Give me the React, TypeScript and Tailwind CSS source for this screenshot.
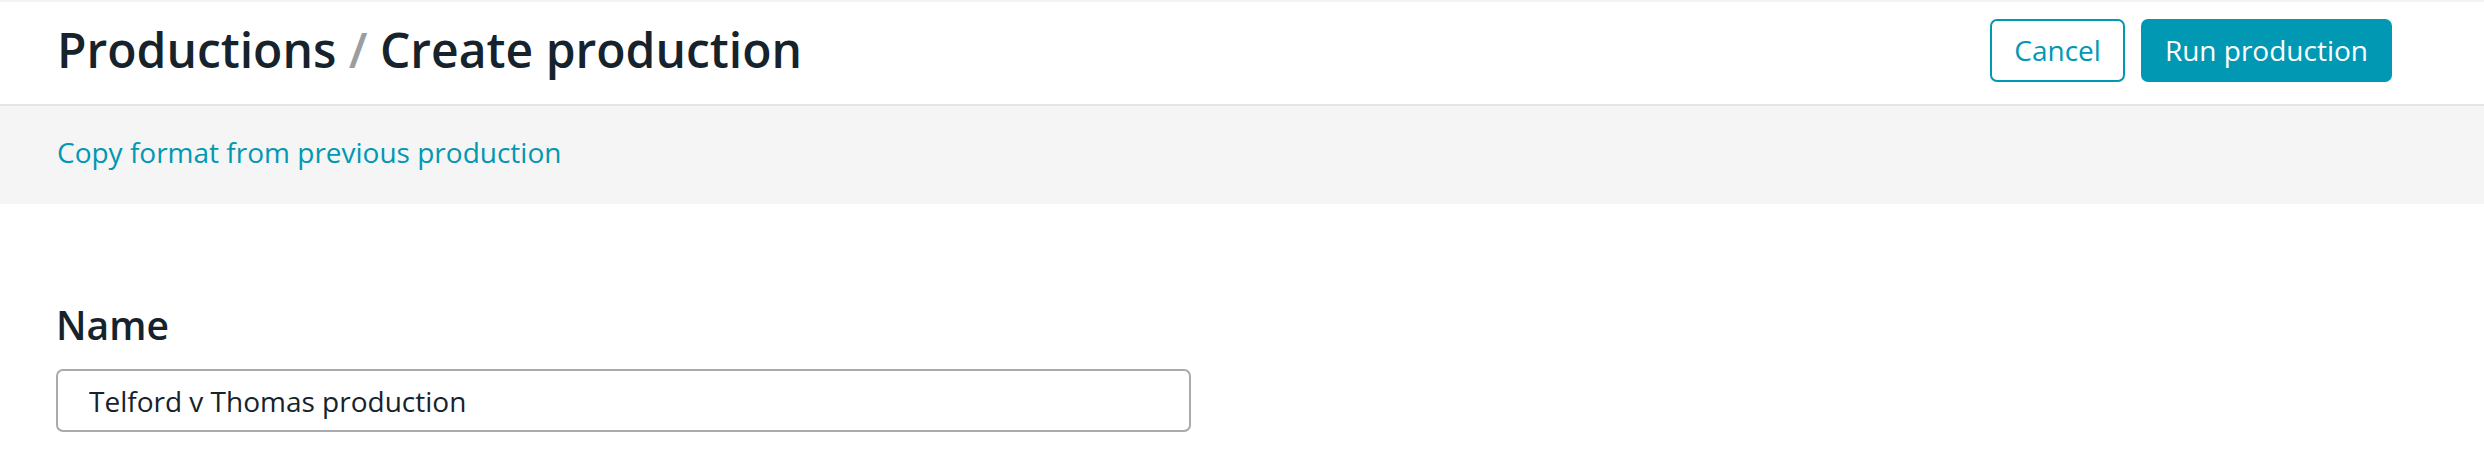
export default function App() {
  return (
    <div className="min-h-[462px] w-full bg-white font-['Open_Sans',sans-serif] text-[#16232c]">
      {/* Header */}
      <header className="flex h-[106px] items-center justify-between border-t-2 border-b-2 border-t-[#f3f3f3] border-b-[#e4e4e4] pb-[6px] pl-[57px] pr-[92px]">
        <h1 className="text-[48px] leading-none font-semibold">
          Productions <span className="text-[#9b9da1]">/</span> Create production
        </h1>
        <div className="flex items-center gap-[16px]">
          <button className="h-[63px] rounded-[7px] border-2 border-[#0098b3] bg-white px-[22px] text-[28px] text-[#0098b3]">
            Cancel
          </button>
          <button className="h-[63px] rounded-[7px] bg-[#0098b3] px-[24px] text-[28px] text-white">
            Run production
          </button>
        </div>
      </header>

      {/* Copy format bar */}
      <div className="flex h-[98px] items-center bg-[#f5f5f5] pb-[6px] px-[57px]">
        <a href="#" className="text-[28px] text-[#0098b3]">
          Copy format from previous production
        </a>
      </div>

      {/* Form */}
      <div className="px-[56px] pt-[101px]">
        <label className="block text-[39px] leading-none font-semibold">Name</label>
        <input
          type="text"
          defaultValue="Telford v Thomas production"
          className="mt-[25px] h-[63px] w-[1135px] rounded-[7px] border-2 border-[#a9aaad] px-[31px] text-[28px] text-[#16232c] outline-none"
        />
      </div>
    </div>
  )
}
